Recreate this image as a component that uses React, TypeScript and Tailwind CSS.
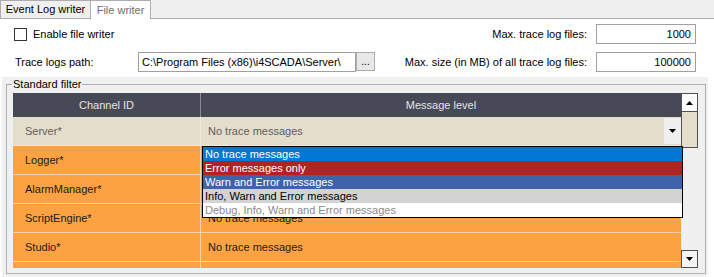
import React from "react";

const rows = [
  { id: "Logger*", level: "No trace messages" },
  { id: "AlarmManager*", level: "No trace messages" },
  { id: "ScriptEngine*", level: "No trace messages" },
  { id: "Studio*", level: "No trace messages" },
];

const options = [
  { label: "No trace messages", cls: "bg-[#0078d7] text-white" },
  { label: "Error messages only", cls: "bg-[#b22222] text-white" },
  { label: "Warn and Error messages", cls: "bg-[#3e63a9] text-white" },
  { label: "Info, Warn and Error messages", cls: "bg-[#d3d3d3] text-black" },
  { label: "Debug, Info, Warn and Error messages", cls: "bg-white text-[#8a8a8a]" },
];

function TriUp() {
  return (
    <svg width="7" height="4" viewBox="0 0 7 4">
      <path d="M0 4 L3.5 0 L7 4 Z" fill="#000" />
    </svg>
  );
}
function TriDown() {
  return (
    <svg width="7" height="4" viewBox="0 0 7 4">
      <path d="M0 0 L7 0 L3.5 4 Z" fill="#000" />
    </svg>
  );
}

export default function App() {
  return (
    <div className="w-[714px] h-[277px] bg-white overflow-hidden flex flex-col text-[11px] leading-none text-black font-['Liberation_Sans',Arial,sans-serif]">
      {/* Tab strip */}
      <div className="h-[19px] shrink-0 bg-[#f0f0f0] border-b border-[#acacac] flex items-end">
        <div className="h-[18px] w-[91px] border border-b-0 border-[#acacac] bg-[#f0f0f0] flex items-center justify-center">
          Event Log writer
        </div>
        <div className="h-[19px] w-[61px] -mb-px -ml-px border border-b-0 border-[#acacac] bg-white flex items-center justify-center text-[#6d6d6d]">
          File writer
        </div>
      </div>

      {/* Top controls */}
      <div className="pt-[5px] shrink-0 flex flex-col gap-[8px]">
        <div className="h-[20px] flex items-center">
          <div className="ml-[14px] w-[13px] h-[13px] border border-[#333] bg-white" />
          <span className="ml-[6px]">Enable file writer</span>
          <div className="flex-1" />
          <span>Max. trace log files:</span>
          <div className="ml-[9px] mr-[18px] w-[100px] h-[20px] border border-[#a0a0a0] bg-white flex items-center justify-end pr-[4px]">
            1000
          </div>
        </div>
        <div className="h-[20px] flex items-center">
          <span className="ml-[15px] w-[123px]">Trace logs path:</span>
          <div className="w-[218px] h-[20px] border border-[#a0a0a0] bg-white flex items-center pl-[3px] overflow-hidden whitespace-nowrap">
            C:\Program Files (x86)\i4SCADA\Server\
          </div>
          <div className="w-[19px] h-[19px] self-start border border-[#adadad] bg-[#e8e8e8] flex items-end justify-center pb-[3px] text-[10px]">
            ...
          </div>
          <div className="flex-1" />
          <span>Max. size (in MB) of all trace log files:</span>
          <div className="ml-[9px] mr-[18px] w-[100px] h-[20px] border border-[#a0a0a0] bg-white flex items-center justify-end pr-[4px]">
            100000
          </div>
        </div>
      </div>

      {/* Group panel */}
      <div className="mt-[5px] flex-1 bg-[#f0f0f0] ml-[2px] mr-[6px] pt-[7px] pl-[4px]">
        <div className="relative w-[700px] h-[190px] border border-[#b0b0b0] pt-[8px] pl-[6px]">
          <span className="absolute -top-[7px] left-[5px] bg-[#f0f0f0] px-[1px] leading-[13px]">Standard filter</span>
          <div className="flex h-[175px]">
            {/* Data area */}
            <div className="relative w-[668px] flex flex-col overflow-visible">
              <div className="h-[175px] overflow-hidden flex flex-col">
                {/* header */}
                <div className="h-[24px] shrink-0 bg-[#474957] flex text-[#e4e4e4]">
                  <div className="w-[188px] border-r border-[#8a8b95] flex items-center justify-center">Channel ID</div>
                  <div className="flex-1 flex items-center justify-center">Message level</div>
                </div>
                {/* Server row */}
                <div className="h-[29px] shrink-0 bg-[#e4ddcb] flex border-b border-[#efe9dc] text-[#5e5e5e]">
                  <div className="w-[188px] border-r border-[#efe9dc] flex items-center pl-[12px]">Server*</div>
                  <div className="flex-1 flex items-stretch">
                    <div className="flex-1 flex items-center pl-[7px]">No trace messages</div>
                    <div className="w-[17px] my-[1px] bg-[#f0f0f0] flex items-center justify-center">
                      <TriDown />
                    </div>
                  </div>
                </div>
                {rows.map((r) => (
                  <div key={r.id} className="h-[29px] shrink-0 bg-[#fca242] flex border-b border-[#f9d3a8] text-[#1a1a1a]">
                    <div className="w-[188px] border-r border-[#f9d3a8] flex items-center pl-[12px]">{r.id}</div>
                    <div className="flex-1 flex items-center pl-[7px]">{r.level}</div>
                  </div>
                ))}
                <div className="h-[29px] shrink-0 bg-[#fca242] flex">
                  <div className="w-[188px] border-r border-[#f9d3a8]" />
                  <div className="flex-1" />
                </div>
              </div>
              {/* Dropdown list */}
              <div className="absolute left-[189px] top-[53px] w-[481px] border border-black bg-white flex flex-col">
                {options.map((o) => (
                  <div key={o.label} className={`h-[14px] flex items-center pl-[2px] whitespace-nowrap ${o.cls}`}>
                    {o.label}
                  </div>
                ))}
              </div>
            </div>
            {/* Scrollbar */}
            <div className="w-[17px] h-[175px] flex flex-col bg-[#f0f0f0]">
              <div className="h-[19px] border border-[#505050] bg-white flex items-center justify-center">
                <TriUp />
              </div>
              <div className="h-[36px] border border-t-0 border-[#505050] bg-[#e4ddcb]" />
              <div className="flex-1" />
              <div className="h-[18px] border border-[#505050] bg-[#f4f4f4] flex items-center justify-center">
                <TriDown />
              </div>
            </div>
          </div>
        </div>
      </div>
    </div>
  );
}
